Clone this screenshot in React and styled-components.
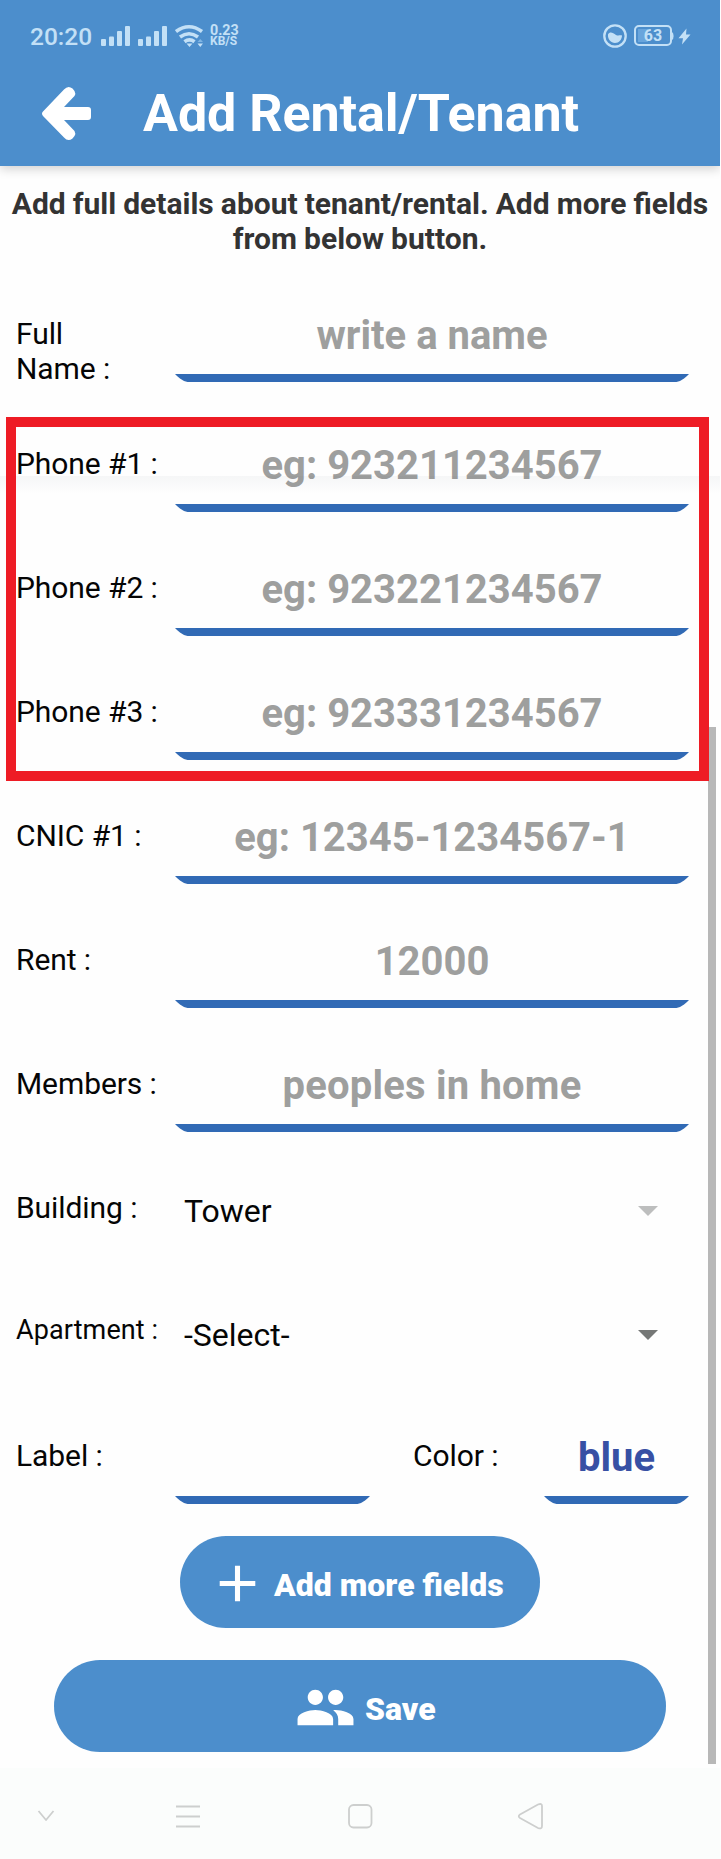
import React from "react";
import styled, { createGlobalStyle } from "styled-components";
import { MdAdd, MdPeople } from "react-icons/md";

const Global = createGlobalStyle`
  body { margin: 0; background: #fefefe; }
  * { box-sizing: border-box; }
`;

const Screen = styled.div`
  position: relative;
  width: 720px;
  height: 1859px;
  display: flex;
  flex-direction: column;
  overflow: hidden;
  background: #fefefe;
  font-family: Roboto, "Liberation Sans", sans-serif;
  color: #050505;
`;

const Header = styled.header`
  height: 166px;
  flex: none;
  background: #4c8ecc;
  box-shadow: 0 3px 10px rgba(0, 0, 0, 0.18);
`;

const StatusBar = styled.div`
  height: 72px;
  padding: 0 29px 0 30px;
  display: flex;
  justify-content: space-between;
  color: #c3e0f6;
`;

const StatusGroup = styled.div`
  display: flex;
  align-items: flex-start;
`;

const Clock = styled.span`
  width: 71px;
  margin-top: 22px;
  font-size: 24.5px;
  font-weight: 500;
  line-height: 29px;
`;

const StatusIcon = styled.svg`
  display: block;
  width: ${(p) => p.$w}px;
  height: 72px;
  flex: none;
`;

const Speed = styled.div`
  display: flex;
  flex-direction: column;
  margin: 24px 0 0 4px;
  font-weight: 700;
  span:first-child { font-size: 14.3px; line-height: 12px; }
  span:last-child { font-size: 12px; line-height: 11px; }
`;

const Battery = styled.div`
  width: 38px;
  height: 21px;
  margin: 25px 0 0 7px;
  border: 2px solid currentColor;
  border-radius: 5px;
  font-size: 16px;
  font-weight: 700;
  line-height: 17.5px;
  text-align: center;
  background: linear-gradient(#69a5dc, #69a5dc) 2px 2px / 10px 13px no-repeat;
`;

const TitleBar = styled.div`
  display: flex;
  height: 94px;
`;

const BackIcon = styled.svg`
  width: 143px;
  height: 94px;
  flex: none;
`;

const Title = styled.h1`
  margin: 11px 0 0;
  font-size: 52px;
  line-height: 61px;
  font-weight: 700;
  letter-spacing: -0.06px;
  color: #fff;
  white-space: nowrap;
`;

const Form = styled.main`
  flex: 1;
  padding-top: 20px;
`;

const Intro = styled.p`
  margin: 0 0 2px;
  height: 70px;
  font-size: 30px;
  line-height: 35px;
  font-weight: 700;
  word-spacing: -0.4px;
  text-align: center;
  color: #333;
  white-space: nowrap;
`;

const Row = styled.div`
  display: flex;
  height: 124px;
  padding: 0 31px 0 16px;
  margin-bottom: ${(p) => p.$gap || 0}px;
`;

const Label = styled.label`
  width: ${(p) => p.$w || 159}px;
  flex: none;
  padding-top: 58px;
  font-size: ${(p) => (p.$small ? 27 : 30)}px;
  line-height: ${(p) => (p.$small ? 32 : 35)}px;
  letter-spacing: ${(p) => (p.$small ? 0.1 : -0.08)}px;
  white-space: pre-line;
`;

const Field = styled.div`
  width: ${(p) => p.$w || 514}px;
  display: flex;
  flex-direction: column;
  justify-content: space-between;
  padding-top: 54px;
  font-size: 40px;
  line-height: 47px;
  font-weight: 700;
  letter-spacing: ${(p) => p.$tracking || 0}px;
  text-align: center;
  white-space: nowrap;
  color: ${(p) => (p.$filled ? "#3750a4" : "#9e9f9e")};

  &::after {
    content: "";
    height: 8px;
    margin-top: auto;
    background: #316ab5;
    clip-path: polygon(0 0, 100% 0, calc(100% - 2px) 2px, calc(100% - 5px) 4.5px, calc(100% - 9px) 7px, calc(100% - 12.5px) 8px, 12.5px 8px, 9px 7px, 5px 4.5px, 2px 2px);
  }
`;

const Spacer = styled.div`
  width: 43px;
`;

const Select = styled.div`
  display: flex;
  justify-content: space-between;
  width: 483px;
  padding: 60px 0 0 9px;
  font-size: 32px;
  line-height: 38px;
`;

const Caret = styled.i`
  margin-top: 14px;
  height: 0;
  border: 10px solid transparent;
  border-bottom: 0;
  border-top-color: ${(p) => (p.$disabled ? "#bdbebe" : "#757776")};
`;

const PhoneGroup = styled.section`
  position: relative;
`;

const Highlight = styled.div`
  position: absolute;
  z-index: 3;
  left: 6px;
  top: 28.5px;
  width: 703px;
  height: 364.5px;
  border: 10px solid #ee1c25;
`;

const Seam = styled.div`
  position: absolute;
  left: 0;
  right: 0;
  top: 88px;
  height: 18px;
  background: linear-gradient(rgba(60, 70, 90, 0.045), rgba(60, 70, 90, 0));
`;

const Button = styled.button`
  display: flex;
  align-items: center;
  width: ${(p) => p.$w}px;
  height: 92px;
  margin: 32px 0 0 ${(p) => p.$x}px;
  padding: 0 0 0 ${(p) => p.$pad}px;
  border: 0;
  border-radius: 46px;
  background: #4c8ecc;
  color: #fff;
  font-family: inherit;
  font-size: 32px;
  font-weight: 900;
  line-height: 38px;
  white-space: nowrap;
  svg { flex: none; width: 61px; height: 61px; margin-top: 2px; }
  span { margin: 5px 0 0 ${(p) => p.$textGap}px; }
`;

const ScrollThumb = styled.div`
  position: absolute;
  z-index: 1;
  left: 708px;
  top: 727px;
  width: 8px;
  height: 1037px;
  background: #b8b8b8;
`;

const NavBar = styled.nav`
  height: 91px;
  flex: none;
  background: #fbfdfc;
  svg { display: block; }
`;

const Signal = () => (
  <StatusIcon $w={37} viewBox="0 0 37 72" fill="currentColor">
    <rect x="0" y="39" width="5" height="7" rx="1" />
    <rect x="8" y="36.5" width="5" height="9.5" rx="1" />
    <rect x="16" y="31" width="5" height="15" rx="1" />
    <rect x="24" y="26" width="5" height="20" rx="1" />
  </StatusIcon>
);

const Entry = ({ label, hint, gap, tracking }) => (
  <Row $gap={gap}>
    <Label>{label}</Label>
    <Field $tracking={tracking}>{hint}</Field>
  </Row>
);

export default function App() {
  return (
    <>
      <Global />
      <Screen>
        <Header>
          <StatusBar>
            <StatusGroup>
              <Clock>20:20</Clock>
              <Signal />
              <Signal />
              <StatusIcon $w={31} viewBox="175 0 31 72" fill="none" stroke="currentColor" strokeWidth="3.6">
                <path d="M176 31.5Q189 22 202 31.5M180 37Q189 30.500 198 37M184.500 41.800Q189.500 38 194.500 41.800" />
                <path d="M186.500 43.500h6l-3 3.500zM197.500 43.500h5.500l-2.750 3.500z" fill="currentColor" stroke="none" />
                <path d="M197.500 42h5.500l-2.750-3z" fill="#7fb5e4" stroke="none" />
              </StatusIcon>
              <Speed><span>0.23</span><span>KB/S</span></Speed>
            </StatusGroup>
            <StatusGroup>
              <StatusIcon $w={24} viewBox="603 0 24 72" fill="none" stroke="currentColor" strokeWidth="2.3">
                <circle cx="615" cy="36" r="10.700" />
                <path d="M608 34.500C610 31 613 33 616 35C618 36.200 620 35 622 35.500C622 39.500 619 43 615 43C611 43 607.500 39 608 34.500Z" fill="currentColor" stroke="none" />
              </StatusIcon>
              <Battery>63</Battery>
              <StatusIcon $w={19} viewBox="672 0 19 72" fill="currentColor">
                <path d="M672 32q1.600 1 1.600 4t-1.600 4z" />
                <path d="M686.500 28.500L678.500 38.200H683L682 44.500L690.500 34.500H686z" />
              </StatusIcon>
            </StatusGroup>
          </StatusBar>
          <TitleBar>
            <BackIcon viewBox="0 72 143 94" fill="#fff">
              <path d="M43 111.500L64 89.500Q68 85 72.500 88.500L74.500 91Q76 93.500 74.500 96L64 107H88Q91 107 91 110V117Q91 120 88 120H64L74.500 131Q76 133.500 74.500 136L72.500 138.500Q68 142 64 137.500L43 116Q41 113.700 43 111.500Z" />
            </BackIcon>
            <Title>Add Rental/Tenant</Title>
          </TitleBar>
        </Header>

        <Form>
          <Intro>
            Add full details about tenant/rental. Add more fields
            <br />
            from below button.
          </Intro>
          <Entry label={"Full\nName :"} hint="write a name" gap={6} />
          <PhoneGroup>
            <Entry label="Phone #1 :" hint="eg: 923211234567" />
            <Entry label="Phone #2 :" hint="eg: 923221234567" />
            <Entry label="Phone #3 :" hint="eg: 923331234567" />
            <Seam />
            <Highlight />
          </PhoneGroup>
          <Entry label="CNIC #1 :" hint="eg: 12345-1234567-1" />
          <Entry label="Rent :" hint="12000" />
          <Entry label="Members :" hint="peoples in home" tracking={0.2} />
          <Row>
            <Label>Building :</Label>
            <Select>Tower<Caret $disabled /></Select>
          </Row>
          <Row>
            <Label $small>Apartment :</Label>
            <Select>-Select-<Caret /></Select>
          </Row>
          <Row>
            <Label>Label :</Label>
            <Field $w={195} />
            <Spacer />
            <Label $w={131}>Color :</Label>
            <Field $w={145} $filled>blue</Field>
          </Row>
          <Button $w={360} $x={180} $pad={26.5} $textGap={6.5}>
            <MdAdd /><span>Add more fields</span>
          </Button>
          <Button $w={612} $x={54} $pad={240.5} $textGap={9.5}>
            <MdPeople /><span>Save</span>
          </Button>
        </Form>

        <NavBar>
          <svg width="720" height="91" viewBox="0 1768 720 91" fill="none" stroke="#cdcfce" strokeWidth="1.800" strokeLinejoin="round">
            <path d="M38.500 1811L46 1820L53.500 1811" />
            <path d="M176 1806.500H200M176 1816.500H200M176 1826.500H200" />
            <rect x="349" y="1805" width="22.500" height="22.500" rx="4.500" />
            <path d="M520 1814.500L538 1804.500Q542 1803 542 1806V1826Q542 1829.500 538 1828L520 1818Q517.500 1816.200 520 1814.500Z" />
          </svg>
        </NavBar>
        <ScrollThumb />
      </Screen>
    </>
  );
}
